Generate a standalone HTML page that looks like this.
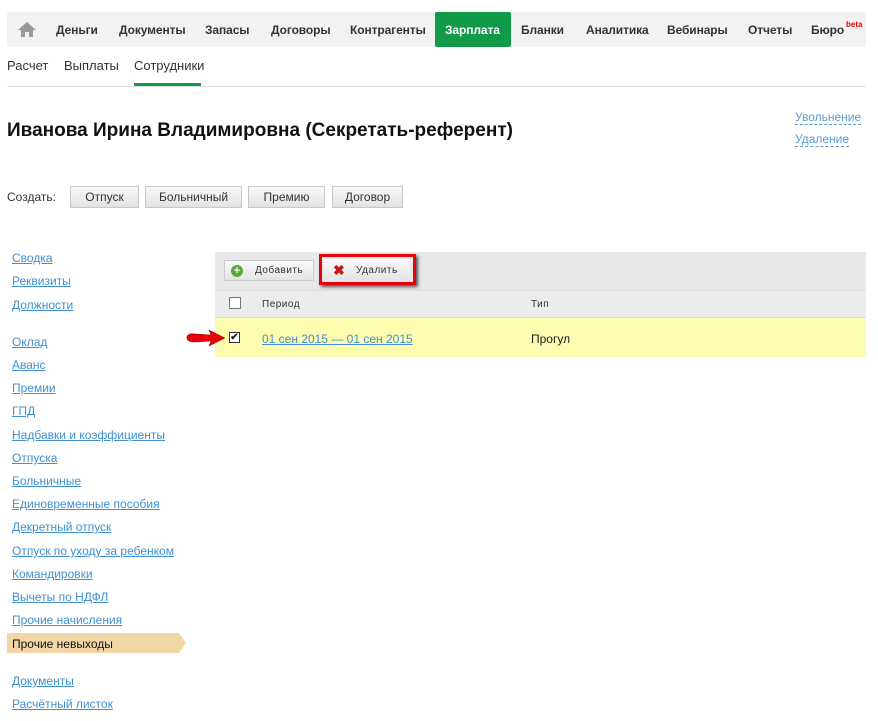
<!DOCTYPE html><html><head><meta charset="utf-8"><style>
*{margin:0;padding:0;box-sizing:border-box}
body{width:878px;height:721px;background:#fff;font-family:"Liberation Sans",sans-serif;position:relative;overflow:hidden;color:#222}
.a{position:absolute;white-space:nowrap}
.nav{left:7px;top:12px;width:859px;height:35px;background:#f2f2f2;border-radius:3px}
.ni{top:23px;font-size:12px;font-weight:bold;color:#333;letter-spacing:-0.1px}
.lk{color:#3f8fd2;text-decoration:underline;font-size:12px;left:12px}
.btn{top:186px;height:22px;background:linear-gradient(#f8f8f8,#e2e2e2);border:1px solid #c8c8c8;font-size:12px;text-align:center;line-height:20px;color:#333}
</style></head><body>
<div class="a nav"></div>
<svg class="a" style="left:17px;top:21px" width="20" height="17" viewBox="0 0 20 17"><path d="M10 1 L1 9 H4 V16 H8 V11 H12 V16 H16 V9 H19 Z" fill="#9a9a9a"/></svg>
<div class="a ni" style="left:56px">Деньги</div>
<div class="a ni" style="left:119px">Документы</div>
<div class="a ni" style="left:205px">Запасы</div>
<div class="a ni" style="left:271px">Договоры</div>
<div class="a ni" style="left:350px">Контрагенты</div>
<div class="a" style="left:435px;top:12px;width:76px;height:35px;background:#119a48;border-radius:2px"></div>
<div class="a ni" style="left:445px;color:#fff">Зарплата</div>
<div class="a ni" style="left:521px">Бланки</div>
<div class="a ni" style="left:586px">Аналитика</div>
<div class="a ni" style="left:667px">Вебинары</div>
<div class="a ni" style="left:748px">Отчеты</div>
<div class="a ni" style="left:811px">Бюро</div>
<div class="a" style="left:846px;top:20px;font-size:8px;color:#e00;font-weight:bold">beta</div>
<div class="a" style="left:7px;top:58px;font-size:13px;color:#333">Расчет</div>
<div class="a" style="left:64px;top:58px;font-size:13px;color:#333">Выплаты</div>
<div class="a" style="left:134px;top:58px;font-size:13px;color:#333">Сотрудники</div>
<div class="a" style="left:134px;top:83px;width:67px;height:3px;background:#119a48"></div>
<div class="a" style="left:7px;top:86px;width:859px;height:1px;background:#e2e2e2"></div>
<div class="a" style="left:7px;top:120px;font-size:19px;font-weight:bold;color:#111">Иванова Ирина Владимировна (Секретать-референт)</div>
<div class="a" style="left:795px;top:110px;font-size:12px;color:#5a9bd5;border-bottom:1px dashed #5a9bd5">Увольнение</div>
<div class="a" style="left:795px;top:132px;font-size:12px;color:#5a9bd5;border-bottom:1px dashed #5a9bd5">Удаление</div>
<div class="a" style="left:7px;top:190px;font-size:12px;color:#333">Создать:</div>
<div class="a btn" style="left:70px;width:69px">Отпуск</div>
<div class="a btn" style="left:145px;width:97px">Больничный</div>
<div class="a btn" style="left:248px;width:77px">Премию</div>
<div class="a btn" style="left:332px;width:71px">Договор</div>
<div class="a lk" style="top:251px">Сводка</div>
<div class="a lk" style="top:274px">Реквизиты</div>
<div class="a lk" style="top:298px">Должности</div>
<div class="a lk" style="top:335px">Оклад</div>
<div class="a lk" style="top:358px">Аванс</div>
<div class="a lk" style="top:381px">Премии</div>
<div class="a lk" style="top:404px">ГПД</div>
<div class="a lk" style="top:428px">Надбавки и коэффициенты</div>
<div class="a lk" style="top:451px">Отпуска</div>
<div class="a lk" style="top:474px">Больничные</div>
<div class="a lk" style="top:497px">Единовременные пособия</div>
<div class="a lk" style="top:520px">Декретный отпуск</div>
<div class="a lk" style="top:544px">Отпуск по уходу за ребенком</div>
<div class="a lk" style="top:567px">Командировки</div>
<div class="a lk" style="top:590px">Вычеты по НДФЛ</div>
<div class="a lk" style="top:613px">Прочие начисления</div>
<div class="a" style="left:7px;top:633px;width:172px;height:20px;background:#f2d6a6"></div>
<div class="a" style="left:179px;top:633px;width:0;height:0;border-top:10px solid transparent;border-bottom:10px solid transparent;border-left:7px solid #f2d6a6"></div>
<div class="a" style="left:12px;top:637px;font-size:12px;color:#111">Прочие невыходы</div>
<div class="a lk" style="top:674px">Документы</div>
<div class="a lk" style="top:697px">Расчётный листок</div>
<div class="a" style="left:215px;top:252px;width:651px;height:38px;background:#e8e8e8"></div>
<div class="a" style="left:224px;top:260px;width:90px;height:21px;background:linear-gradient(#fafafa,#e4e4e4);border:1px solid #ccc"></div>
<div class="a" style="left:231px;top:265px;width:12px;height:12px;border-radius:50%;background:#5aa83a;color:#fff;font-size:11px;font-weight:bold;text-align:center;line-height:12px">+</div>
<div class="a" style="left:255px;top:265px;font-size:10px;color:#333;letter-spacing:.5px">Добавить</div>
<div class="a" style="left:319px;top:254px;width:97px;height:31px;border:3px solid #e8000a;box-shadow:2px 2px 3px #555"></div>
<div class="a" style="left:324px;top:259px;width:86px;height:21px;background:linear-gradient(#fafafa,#e4e4e4)"></div>
<div class="a" style="left:333px;top:262px;font-size:14px;color:#c8151b;font-weight:bold">✖</div>
<div class="a" style="left:356px;top:265px;font-size:10px;color:#333;letter-spacing:.5px">Удалить</div>
<div class="a" style="left:215px;top:290px;width:651px;height:28px;background:#ececec;border-top:1px solid #ddd;border-bottom:1px solid #ddd"></div>
<div class="a" style="left:229px;top:297px;width:12px;height:12px;border:1px solid #777;background:#fff"></div>
<div class="a" style="left:262px;top:299px;font-size:10px;color:#333;letter-spacing:.5px">Период</div>
<div class="a" style="left:531px;top:299px;font-size:10px;color:#333;letter-spacing:.5px">Тип</div>
<div class="a" style="left:215px;top:318px;width:651px;height:39px;background:#fdfbad"></div>
<div class="a" style="left:229px;top:332px;width:11px;height:11px;border:1px solid #333;background:#fff;font-size:10px;line-height:9px;text-align:center;font-weight:bold">✔</div>
<svg class="a" style="left:185px;top:328px" width="42" height="20" viewBox="0 0 42 20"><path d="M2 8 Q4 5 10 6 L26 7 L24 2 L40 10 L24 18 L26 13 L10 14 Q3 14 2 11 Z" fill="#e8000a" stroke="#900" stroke-width=".5"/></svg>
<div class="a" style="left:262px;top:332px;font-size:12px;color:#3f8fd2;text-decoration:underline">01 сен 2015 — 01 сен 2015</div>
<div class="a" style="left:531px;top:332px;font-size:12px;color:#222">Прогул</div>
</body></html>
